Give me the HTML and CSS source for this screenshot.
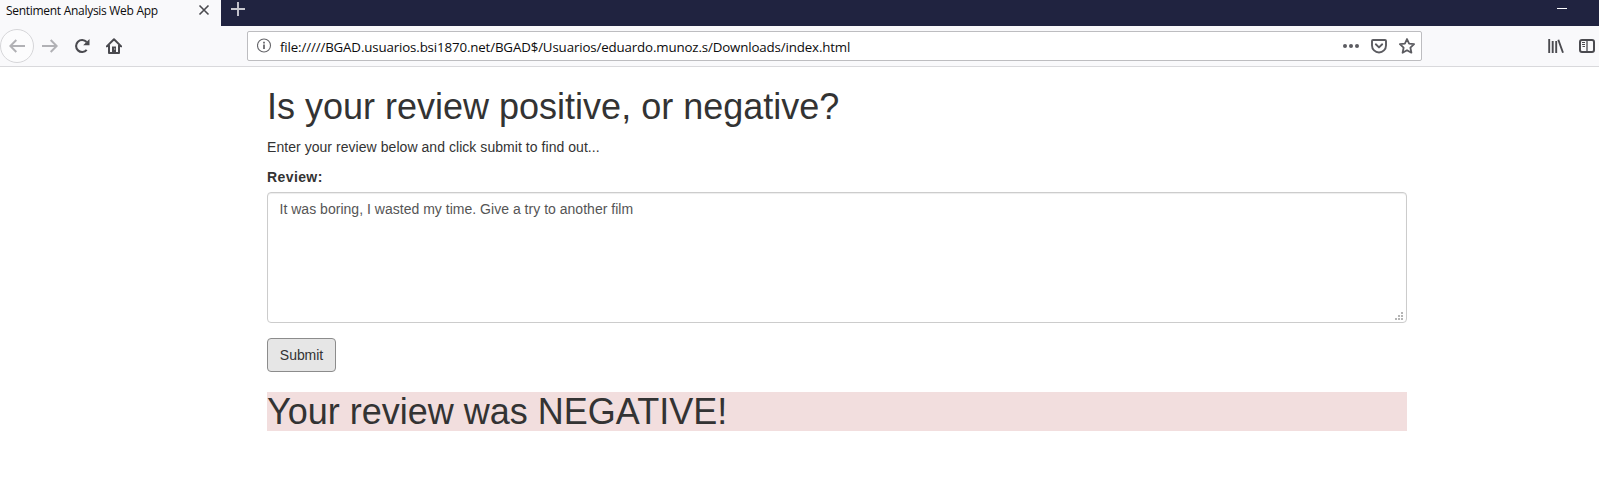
FILE: index.html
```html
<!DOCTYPE html>
<html lang="en">
<head>
<meta charset="utf-8">
<title>Sentiment Analysis Web App</title>
<link rel="stylesheet" href="styles.css">
</head>
<body>
<header class="tabbar">
  <div class="tab">
    <span class="tab-title">Sentiment Analysis Web App</span>
    <svg class="tab-close" width="12" height="12" viewBox="0 0 12 12"><path d="M1.5 1.5l9 9M10.5 1.5l-9 9" stroke="#4a4a4f" stroke-width="1.6" fill="none"/></svg>
  </div>
  <svg class="new-tab" width="14" height="14" viewBox="0 0 14 14"><path d="M7 0v14M0 7h14" stroke="#c9c9d1" stroke-width="1.9"/></svg>
  <span class="minimize"></span>
</header>
<nav class="toolbar">
  <div class="back"><svg width="16" height="14" viewBox="0 0 16 14"><path d="M16 7H1.500M7.300 1L1.300 7l6 6" fill="none" stroke="#b1b1b5" stroke-width="2"/></svg></div>
  <svg class="forward" width="16" height="14" viewBox="0 0 16 14"><path d="M0 7h14.500M8.700 1l6 6-6 6" fill="none" stroke="#b1b1b5" stroke-width="2"/></svg>
  <svg class="reload" width="16" height="16" viewBox="0 0 16 16"><path d="M12.700 11.800A6 6 0 1 1 12.600 4" fill="none" stroke="#4a4a4f" stroke-width="2.100"/><path d="M15.500 1v6.300H9.200z" fill="#4a4a4f"/></svg>
  <svg class="home" width="16" height="16" viewBox="0 0 16 16"><path d="M.8 8.400L8 1.200l7.200 7.200M3 7.500V15h10V7.500" fill="none" stroke="#4a4a4f" stroke-width="2" stroke-linejoin="round" stroke-linecap="round"/><path d="M6 15V8.500h4V15z" fill="#4a4a4f"/><path d="M8.200 11h1" stroke="#fff"/></svg>
  <div class="urlbar">
    <svg width="15" height="15" viewBox="0 0 15 15"><circle cx="7" cy="7.500" r="6.500" fill="none" stroke="#66666a" stroke-width="1.100"/><path d="M7 6.500V11M7 3.800v1.600" stroke="#55555a" stroke-width="1.600"/></svg>
    <span class="url">file://///BGAD.usuarios.bsi1870.net/BGAD$/Usuarios/eduardo.munoz.s/Downloads/index.html</span>
    <span class="url-actions">
      <svg width="16" height="16" viewBox="0 0 16 16" fill="#5c5c61"><circle cx="2" cy="8" r="2"/><circle cx="8" cy="8" r="2"/><circle cx="14" cy="8" r="2"/></svg>
      <svg width="16" height="16" viewBox="0 0 16 16" fill="none" stroke="#5c5c61" stroke-width="1.900" stroke-linecap="round" stroke-linejoin="round"><path d="M2 2h12q1 0 1 1v4.500a7 7 0 0 1-14 0V3q0-1 1-1z"/><path d="M4.800 6.300L8 9.400l3.200-3.100"/></svg>
      <svg width="16" height="16" viewBox="0 0 16 16" fill="none" stroke="#5c5c61" stroke-width="1.800" stroke-linejoin="round"><path d="M8 1l2.100 4.600 5 .6-3.700 3.500 1 5L8 12.200l-4.400 2.500 1-5L.9 6.200l5-.6z"/></svg>
    </span>
  </div>
  <svg class="library" width="16" height="16" viewBox="0 0 16 16"><path d="M1.200 1v14M4.700 3v12M8.200 3v12M10.300 1.800L15 14.800" stroke="#4a4a4f" stroke-width="1.900" fill="none"/></svg>
  <svg class="sidebar" width="16" height="16" viewBox="0 0 16 16"><rect x="1" y="2" width="14" height="12" rx="2" fill="none" stroke="#4a4a4f" stroke-width="2"/><path d="M8 2v12" stroke="#4a4a4f" stroke-width="1.300"/><path d="M3 4.500h3M3 6.500h3M3.500 8.500H6" stroke="#4a4a4f"/></svg>
</nav>
<main class="container">
  <h1 class="heading">Is your review positive, or negative?</h1>
  <p class="intro">Enter your review below and click submit to find out...</p>
  <form class="form">
    <label class="label" for="review">Review:</label>
    <div class="field">
      <textarea class="review" id="review">It was boring, I wasted my time. Give a try to another film</textarea>
      <svg class="grip" width="8" height="8" viewBox="0 0 8 8" fill="#b5b5b5"><path d="M6 0h2v2H6zM3 3h2v2H3zM6 3h2v2H6zM0 6h2v2H0zM3 6h2v2H3zM6 6h2v2H6z"/></svg>
    </div>
    <button class="submit" type="button">Submit</button>
  </form>
  <h1 class="result">Your review was NEGATIVE!</h1>
</main>
</body>
</html>
```
FILE: styles.css
```css
* { box-sizing: border-box; }
body {
  margin: 0;
  height: 485px;
  overflow: hidden;
  background: #fff;
  color: #333;
  font: 14px/20px "Liberation Sans", Arial, sans-serif;
}
svg { display: block; flex: none; }
.tabbar { display: flex; height: 26px; background: #202340; }
.tab {
  display: flex;
  width: 221px;
  padding: 0 11px 0 6px;
  justify-content: space-between;
  background: #f9f9fb;
}
.tab-title {
  color: #0c0c0d;
  font: 12px/21px "Open Sans", "Noto Sans", sans-serif;
  letter-spacing: -0.29px;
  white-space: nowrap;
}
.tab-close { margin-top: 4px; }
.new-tab { margin: 2px 0 0 10px; }
.minimize { width: 10px; height: 1px; margin: 8px 32px 0 auto; background: #fff; }
.toolbar {
  display: flex;
  align-items: center;
  height: 41px;
  padding-right: 4px;
  padding-bottom: 1px;
  background: #f9f9fb;
  border-bottom: 1px solid #d9d9dc;
}
.back {
  display: flex;
  width: 34px;
  height: 34px;
  align-items: center;
  justify-content: center;
  border: 1px solid #d6d6d9;
  border-radius: 50%;
  background: #fcfcfd;
}
.forward { margin-left: 8px; }
.reload { margin-left: 16px; }
.home { margin-left: 16px; }
.urlbar {
  display: flex;
  align-items: center;
  width: 1175px;
  height: 30px;
  margin-left: 125px;
  padding: 0 6px 0 9px;
  border: 1px solid #bdbdc0;
  border-radius: 2px;
  background: #fff;
}
.url {
  margin-left: 8px;
  padding-top: 2px;
  color: #0c0c0d;
  font: 13.3px/20px "Open Sans", "Noto Sans", sans-serif;
  letter-spacing: -0.14px;
  white-space: nowrap;
}
.url-actions { display: flex; gap: 12px; margin-left: auto; }
.library { margin-left: auto; }
.sidebar { margin-left: 15px; }
.container { width: 1140px; margin: 0 auto 0 267px; padding-top: 20px; }
.heading, .result { margin: 0; font-size: 36px; font-weight: 500; line-height: 39.6px; }
.intro { margin: 10px 0; letter-spacing: 0.05px; }
.form { display: flex; flex-direction: column; align-items: flex-start; }
.label { margin-bottom: 5px; font-weight: 700; letter-spacing: 0.4px; }
.field { position: relative; width: 100%; height: 131px; margin-bottom: 15px; }
.review {
  display: block;
  width: 100%;
  height: 100%;
  padding: 6px 12px 6px 11.5px;
  border: 1px solid #ccc;
  border-radius: 4px;
  background: #fff;
  box-shadow: inset 0 1px 1px rgba(0, 0, 0, .075);
  color: #555;
  font: inherit;
  letter-spacing: 0.02px;
  resize: none;
}
.grip { position: absolute; right: 4px; bottom: 3px; }
.submit {
  width: 69px;
  height: 34px;
  padding: 6px 0;
  border: 1px solid #8c8c8c;
  border-radius: 4px;
  background: #e6e6e6;
  color: #333;
  font: inherit;
  letter-spacing: -0.05px;
}
.result { margin-top: 20px; background: #f2dede; }
```
